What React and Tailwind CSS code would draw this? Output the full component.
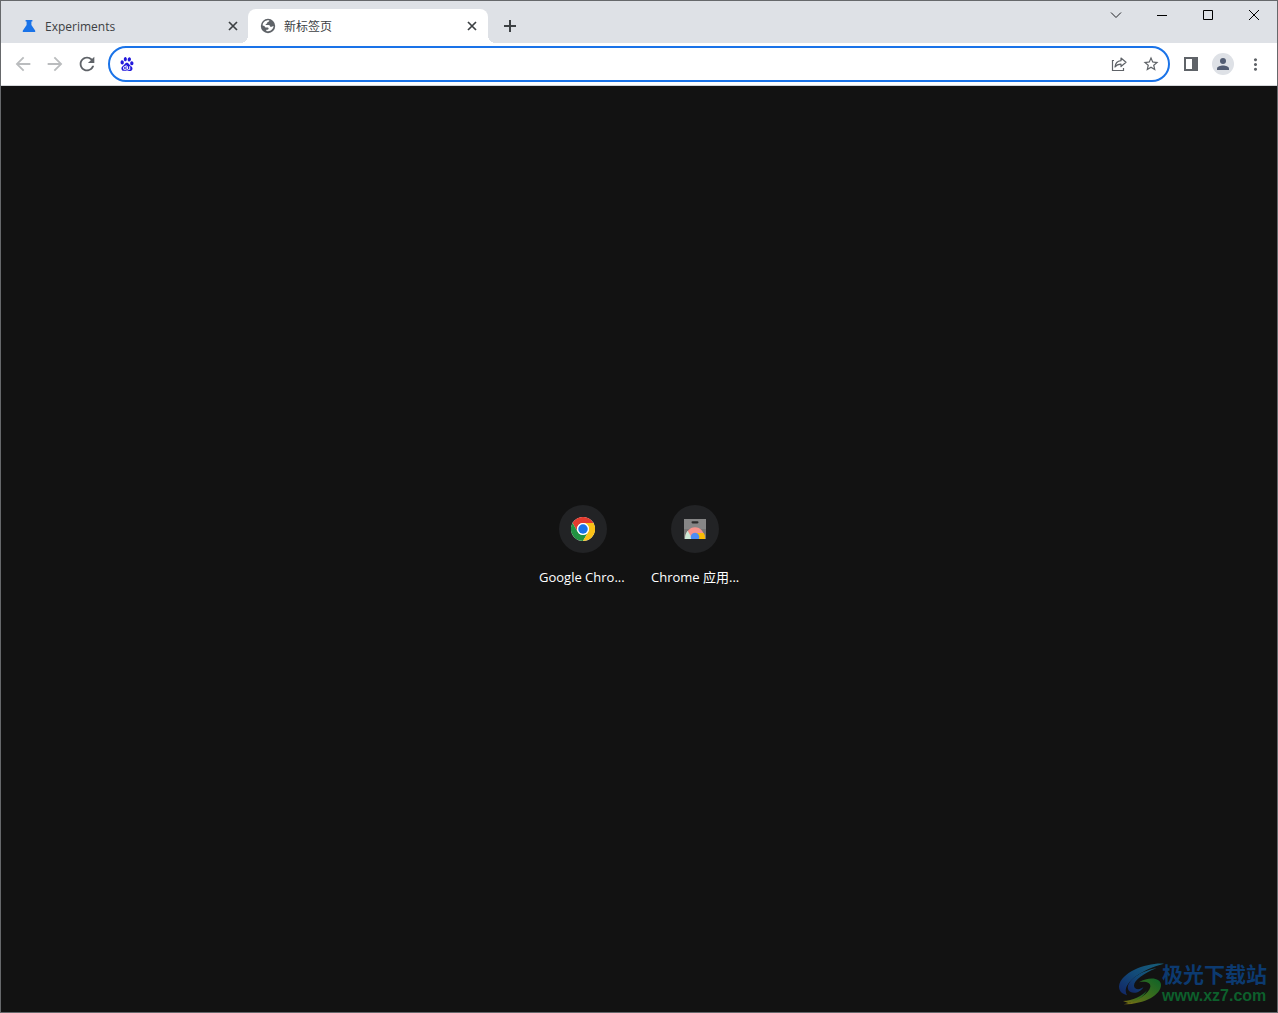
import { useState } from 'react';
import { MdArrowBack, MdArrowForward, MdRefresh, MdStarBorder, MdMoreVert } from 'react-icons/md';
import { SiBaidu } from 'react-icons/si';

const FlaskIcon = () => (
  <svg className="w-4 h-4 shrink-0" viewBox="0 0 16 16" fill="#1a73e8">
    <path d="M4.600 2h6.800v1.400h-1V7l3.700 5.400c.6.900 0 1.600-.9 1.600H2.800c-.9 0-1.500-.7-.9-1.600L5.600 7V3.400h-1z" />
  </svg>
);

const GlobeIcon = () => (
  <svg className="w-4 h-4 shrink-0" viewBox="0 0 16 16">
    <circle cx="8" cy="8" r="7.200" fill="#5f6368" />
    <path
      d="M9.300 2.400c.2.900-.6 1.300-1.400 1.500-.7.200-.7.600-.7 1.200-.1.700-.7.800-1.300.9-.4.200-.4.800 0 1h2.700c1 .1 1.500.8 1.600 1.700h1.500c.8-.1 1-.8 1.700-.8h.1c-.1 2.700-2.300 5-5.300 5.300-.6 0-1.400-.1-1.900-.3v-1.100h1.200c.8-.1 1.100-.6 1.100-1.200 0-.8-.6-1.100-1.300-1.100H5.700c-.8-.1-1-.9-1.200-1.500L2.600 7.400C2.800 4.300 5.200 2.100 9.300 2.400z"
      fill="#fff"
    />
  </svg>
);

const CloseIcon = () => (
  <svg className="w-4 h-4" viewBox="0 0 16 16" fill="none" stroke="#3c4043" strokeWidth="1.700">
    <path d="M4 4l8 8M12 4l-8 8" />
  </svg>
);

const ShareIcon = () => (
  <svg className="w-4 h-4" viewBox="0 0 16 16" fill="none" stroke="#5f6368" strokeWidth="1.200">
    <path d="M3 4.500H1.500v10h11v-2.500" />
    <path d="M10 2l5 4.300-5 4.200V8.200C7.300 8.200 5.400 9 4 11c.3-3.300 2.400-5.800 6-6.300z" strokeLinejoin="round" />
  </svg>
);

const ChromeIcon = () => (
  <svg className="w-6 h-6" viewBox="0 0 48 48">
    <circle cx="24" cy="24" r="24" fill="#fff" />
    <path d="M3.200 12a24 24 0 0 1 41.600 0H24a12 12 0 0 0-10.400 18z" fill="#e33b2e" />
    <path d="M3.200 12a24 24 0 0 0 20.800 36l10.400-18a12 12 0 0 1-20.800 0z" fill="#229342" />
    <path d="M44.800 12A24 24 0 0 1 24 48l10.400-18A12 12 0 0 0 24 12z" fill="#fbc116" />
    <circle cx="24" cy="24" r="12" fill="#fff" />
    <circle cx="24" cy="24" r="9.500" fill="#1a73e8" />
  </svg>
);

const StoreIcon = () => (
  <svg className="w-6 h-6" viewBox="0 0 24 24">
    <path d="M1 2h22v20H1z" fill="#757575" />
    <path d="M1 2h22v10H1z" fill="#868686" />
    <rect x="8.500" y="4.200" width="7" height="2.200" rx="1.100" fill="#2b2b2b" />
    <path d="M2 22a10 11.700 0 0 1 20 0z" fill="#f8948c" />
    <path d="M2 22c0-3.400.9-6 2.600-8.200L9.500 22z" fill="#ceead6" />
    <path d="M12 16h8.700c.9 1.800 1.300 3.700 1.300 6h-9z" fill="#fbbc04" />
    <path d="M8.200 22a4.300 4.300 0 1 1 7.600 0z" fill="#4e8df5" />
  </svg>
);

const SwirlLogo = () => (
  <svg className="w-[45px] h-[42px]" viewBox="0 0 135 126">
    <defs>
      <linearGradient id="swirlBlue" x1="1" y1="0" x2="0" y2="1">
        <stop offset="0" stopColor="#176079" />
        <stop offset="0.5" stopColor="#124a78" />
        <stop offset="1" stopColor="#122464" />
      </linearGradient>
      <linearGradient id="swirlGreen" x1="1" y1="0" x2="0" y2="1">
        <stop offset="0" stopColor="#0e6329" />
        <stop offset="0.5" stopColor="#3c6d1c" />
        <stop offset="1" stopColor="#7d6c14" />
      </linearGradient>
    </defs>
    <path d="M135 2C86-2 6 26 0 70c0 14 8 22 24 27C6 68 52 24 135 2z" fill="url(#swirlBlue)" />
    <path d="M112 16C64 24 22 54 27 78c4 16 36 16 46-6-10 10-28 8-28-4 0-16 30-38 67-52z" fill="url(#swirlBlue)" />
    <path d="M60 58c30-18 66-14 66 8 0 28-46 58-112 58 42-10 76-32 80-52 2-14-16-18-34-14z" fill="url(#swirlGreen)" />
    <path d="M12 114c30 0 56-14 72-32-12 24-34 36-56 38z" fill="url(#swirlGreen)" />
  </svg>
);

const shortcuts = [
  { title: 'Google Chro...', icon: <ChromeIcon /> },
  { title: 'Chrome 应用...', icon: <StoreIcon /> },
];

const App = () => {
  const [query, setQuery] = useState('');

  return (
    <div className="relative min-h-screen flex flex-col border border-[#66686b] bg-[#121212] font-['Open_Sans','Noto_Sans_CJK_SC',sans-serif]">

      {/* Tab strip */}
      <header className="flex items-end h-[42px] pl-2 bg-[#dee1e6]">
        <div className="flex items-center gap-2 w-[239px] h-[34px] pl-3 pr-[7px]">
          <FlaskIcon />
          <span className="flex-1 pt-0.5 text-xs text-[#3c4043]">Experiments</span>
          <button aria-label="Close tab"><CloseIcon /></button>
        </div>

        <div className="relative flex items-center gap-2 w-60 h-[34px] pl-3 pr-2 rounded-t-lg bg-white">
          <span className="absolute bottom-0 right-full w-2 h-2 bg-[radial-gradient(circle_at_0_0,transparent_8px,white_8px)]" />
          <GlobeIcon />
          <span className="flex-1 pt-0.5 text-xs text-[#3c4043]">新标签页</span>
          <button aria-label="Close tab"><CloseIcon /></button>
          <span className="absolute bottom-0 left-full w-2 h-2 bg-[radial-gradient(circle_at_100%_0,transparent_8px,white_8px)]" />
        </div>

        <button aria-label="New tab" className="flex items-center justify-center w-7 h-[34px] ml-2">
          <svg className="w-4 h-4" viewBox="0 0 16 16" fill="none" stroke="#3c4043" strokeWidth="2">
            <path d="M8 2v12M2 8h12" />
          </svg>
        </button>

        {/* Window controls */}
        <div className="flex self-start ml-auto">
          <button aria-label="Search tabs" className="flex items-center justify-center w-[46px] h-7">
            <svg className="w-3 h-3" viewBox="0 0 12 12" fill="none" stroke="#202124"><path d="M1 3.500l5 5 5-5" /></svg>
          </button>
          <button aria-label="Minimize" className="flex items-center justify-center w-[46px] h-7">
            <svg className="w-3 h-3" viewBox="0 0 12 12" fill="none" stroke="#000"><path d="M1 6.500h10" /></svg>
          </button>
          <button aria-label="Maximize" className="flex items-center justify-center w-[46px] h-7">
            <svg className="w-3 h-3" viewBox="0 0 12 12" fill="none" stroke="#000"><path d="M1.500 1.500h9v9h-9z" /></svg>
          </button>
          <button aria-label="Close" className="flex items-center justify-center w-[46px] h-7">
            <svg className="w-3 h-3" viewBox="0 0 12 12" fill="none" stroke="#000"><path d="M1 1l10 10M11 1L1 11" /></svg>
          </button>
        </div>
      </header>

      {/* Toolbar */}
      <div className="flex items-center h-[43px] px-1.5 bg-white border-b border-[#d5d7da] text-[#5f6368]">
        <button aria-label="Back" className="flex justify-center w-8 text-[#babcbe]"><MdArrowBack size={22} /></button>
        <button aria-label="Forward" className="flex justify-center w-8 text-[#babcbe]"><MdArrowForward size={22} /></button>
        <button aria-label="Reload" className="flex justify-center w-8"><MdRefresh size={22} /></button>

        <div className="flex flex-1 items-center h-9 mx-[5px] pl-2.5 pr-px border-2 border-[#1a73e8] rounded-full">
          <SiBaidu size={14} className="shrink-0 text-[#2319dc]" />
          <input
            aria-label="Address"
            type="text"
            value={query}
            onChange={e => setQuery(e.target.value)}
            className="flex-1 min-w-0 h-full px-2 text-sm text-gray-900 outline-none"
          />
          <button aria-label="Share" className="flex justify-center w-8"><ShareIcon /></button>
          <button aria-label="Bookmark" className="flex justify-center w-8"><MdStarBorder size={18} /></button>
        </div>

        <button aria-label="Side panel" className="flex justify-center w-8">
          <svg className="w-4 h-4" viewBox="0 0 16 16"><path d="M1 1h14v14H1zM3 3v10h6V3z" fill="#5f6368" fillRule="evenodd" /></svg>
        </button>
        <button aria-label="Profile" className="flex justify-center w-8">
          <span className="flex items-center justify-center w-[22px] h-[22px] rounded-full bg-[#dee1e6]">
            <svg className="w-3 h-3" viewBox="0 0 12 12" fill="#535d73">
              <circle cx="6" cy="3" r="3" />
              <path d="M0 12v-1.500C0 8.500 3.500 7.500 6 7.500s6 1 6 3V12z" />
            </svg>
          </span>
        </button>
        <button aria-label="Menu" className="flex justify-center w-8"><MdMoreVert size={19} /></button>
      </div>

      {/* Shortcuts */}
      <main className="flex flex-1 items-center justify-center pb-2">
        {shortcuts.map(s => (
          <a key={s.title} href="#" className="flex flex-col items-center w-28 h-28 pt-4">
            <span className="flex items-center justify-center w-12 h-12 rounded-full bg-[#222325]">{s.icon}</span>
            <span className="w-[88px] mt-3.5 text-[13px] leading-5 text-white whitespace-nowrap">{s.title}</span>
          </a>
        ))}
      </main>

      {/* Watermark */}
      <div className="absolute right-2.5 bottom-1.5 flex items-center">
        <SwirlLogo />
        <div className="-ml-0.5">
          <p className="text-[21px] leading-6 font-bold text-[#0c3a70]">极光下载站</p>
          <p className="text-base leading-5 font-bold text-[#0d5f2c] font-['Liberation_Sans',sans-serif]">www.xz7.com</p>
        </div>
      </div>
    </div>
  );
};

export default App;
